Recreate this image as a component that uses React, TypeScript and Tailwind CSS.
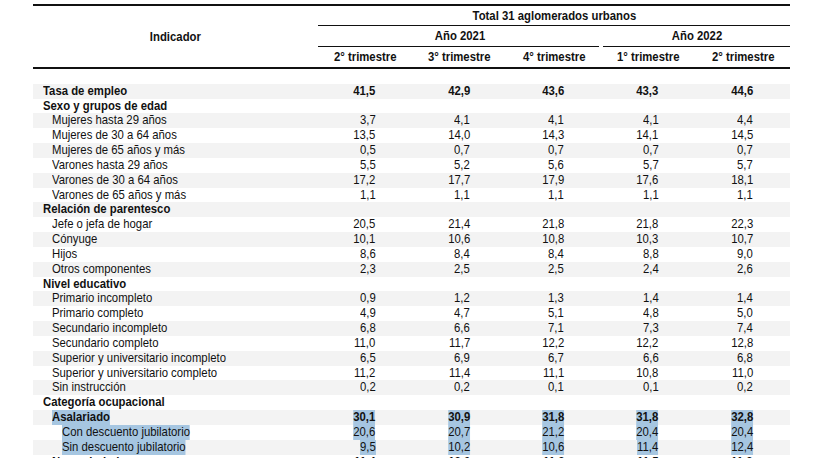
import React from 'react';

type Row = {
  label: string;
  level: 0 | 1 | 2;
  bold?: boolean;
  values?: string[];
  selected?: boolean;
};

const rows: Row[] = [
  { label: 'Tasa de empleo', level: 0, bold: true, values: ['41,5', '42,9', '43,6', '43,3', '44,6'] },
  { label: 'Sexo y grupos de edad', level: 0, bold: true },
  { label: 'Mujeres hasta 29 años', level: 1, values: ['3,7', '4,1', '4,1', '4,1', '4,4'] },
  { label: 'Mujeres de 30 a 64 años', level: 1, values: ['13,5', '14,0', '14,3', '14,1', '14,5'] },
  { label: 'Mujeres de 65 años y más', level: 1, values: ['0,5', '0,7', '0,7', '0,7', '0,7'] },
  { label: 'Varones hasta 29 años', level: 1, values: ['5,5', '5,2', '5,6', '5,7', '5,7'] },
  { label: 'Varones de 30 a 64 años', level: 1, values: ['17,2', '17,7', '17,9', '17,6', '18,1'] },
  { label: 'Varones de 65 años y más', level: 1, values: ['1,1', '1,1', '1,1', '1,1', '1,1'] },
  { label: 'Relación de parentesco', level: 0, bold: true },
  { label: 'Jefe o jefa de hogar', level: 1, values: ['20,5', '21,4', '21,8', '21,8', '22,3'] },
  { label: 'Cónyuge', level: 1, values: ['10,1', '10,6', '10,8', '10,3', '10,7'] },
  { label: 'Hijos', level: 1, values: ['8,6', '8,4', '8,4', '8,8', '9,0'] },
  { label: 'Otros componentes', level: 1, values: ['2,3', '2,5', '2,5', '2,4', '2,6'] },
  { label: 'Nivel educativo', level: 0, bold: true },
  { label: 'Primario incompleto', level: 1, values: ['0,9', '1,2', '1,3', '1,4', '1,4'] },
  { label: 'Primario completo', level: 1, values: ['4,9', '4,7', '5,1', '4,8', '5,0'] },
  { label: 'Secundario incompleto', level: 1, values: ['6,8', '6,6', '7,1', '7,3', '7,4'] },
  { label: 'Secundario completo', level: 1, values: ['11,0', '11,7', '12,2', '12,2', '12,8'] },
  { label: 'Superior y universitario incompleto', level: 1, values: ['6,5', '6,9', '6,7', '6,6', '6,8'] },
  { label: 'Superior y universitario completo', level: 1, values: ['11,2', '11,4', '11,1', '10,8', '11,0'] },
  { label: 'Sin instrucción', level: 1, values: ['0,2', '0,2', '0,1', '0,1', '0,2'] },
  { label: 'Categoría ocupacional', level: 0, bold: true },
  { label: 'Asalariado', level: 1, bold: true, selected: true, values: ['30,1', '30,9', '31,8', '31,8', '32,8'] },
  { label: 'Con descuento jubilatorio', level: 2, selected: true, values: ['20,6', '20,7', '21,2', '20,4', '20,4'] },
  { label: 'Sin descuento jubilatorio', level: 2, selected: true, values: ['9,5', '10,2', '10,6', '11,4', '12,4'] },
  { label: 'No asalariado', level: 1, bold: true, values: ['11,4', '12,0', '11,8', '11,5', '11,8'] },
];

const indent = ['pl-[10px]', 'pl-[19px]', 'pl-[29px]'];
const cols = 'grid grid-cols-[285px_repeat(5,94.4px)]';
const quarters = ['2° trimestre', '3° trimestre', '4° trimestre', '1° trimestre', '2° trimestre'];

// the PDF font is a narrow grotesque; squeeze Liberation Sans to its width
function Narrow({ children, origin, sel }: { children: React.ReactNode; origin: string; sel?: boolean }) {
  return (
    <span className={`inline-block scale-x-[0.84] ${origin} ${sel ? 'bg-[#a6c6e1]' : ''}`}>{children}</span>
  );
}

export default function App() {
  return (
    <div
      className="w-[826px] h-[458px] overflow-hidden bg-white pl-[33px] pt-[4px] text-[13.5px] text-[#111]"
      style={{ fontFamily: '"Liberation Sans", Arial, sans-serif' }}
    >
      <div className="w-[757px]">
        {/* encabezado */}
        <div className={`${cols} border-t-2 border-b-2 border-[#111] font-bold leading-none`}>
          <div className="row-span-3 flex items-center justify-center">
            <Narrow origin="origin-center">Indicador</Narrow>
          </div>
          <div className="col-span-5 h-[20px] border-b border-[#111] flex items-center justify-center">
            <Narrow origin="origin-center">Total 31 aglomerados urbanos</Narrow>
          </div>
          <div className="col-span-3 h-[21px] mr-[2px] border-b border-[#111] flex items-center justify-center pl-[2px]">
            <Narrow origin="origin-center">Año 2021</Narrow>
          </div>
          <div className="col-span-2 h-[21px] ml-[2px] border-b border-[#111] flex items-center justify-center">
            <Narrow origin="origin-center">Año 2022</Narrow>
          </div>
          {quarters.map((t, i) => (
            <div key={i} className="h-[20px] flex items-center justify-center">
              <Narrow origin="origin-center">{t}</Narrow>
            </div>
          ))}
        </div>

        <div className="h-[14.8px]" />

        {rows.map((r, i) => (
          <div
            key={i}
            className={`${cols} h-[14.83px] leading-[14.83px] ${i % 2 === 0 ? 'bg-[#f3f3f3]' : ''} ${r.bold ? 'font-bold' : ''}`}
          >
            <div className={`${indent[r.level]} whitespace-nowrap`}>
              <Narrow origin="origin-left" sel={r.selected}>{r.label}</Narrow>
            </div>
            {(r.values ?? ['', '', '', '', '']).map((v, j) => (
              <div key={j} className="text-right pr-[37px]">
                <Narrow origin="origin-right" sel={r.selected}>{v}</Narrow>
              </div>
            ))}
          </div>
        ))}
      </div>
    </div>
  );
}
